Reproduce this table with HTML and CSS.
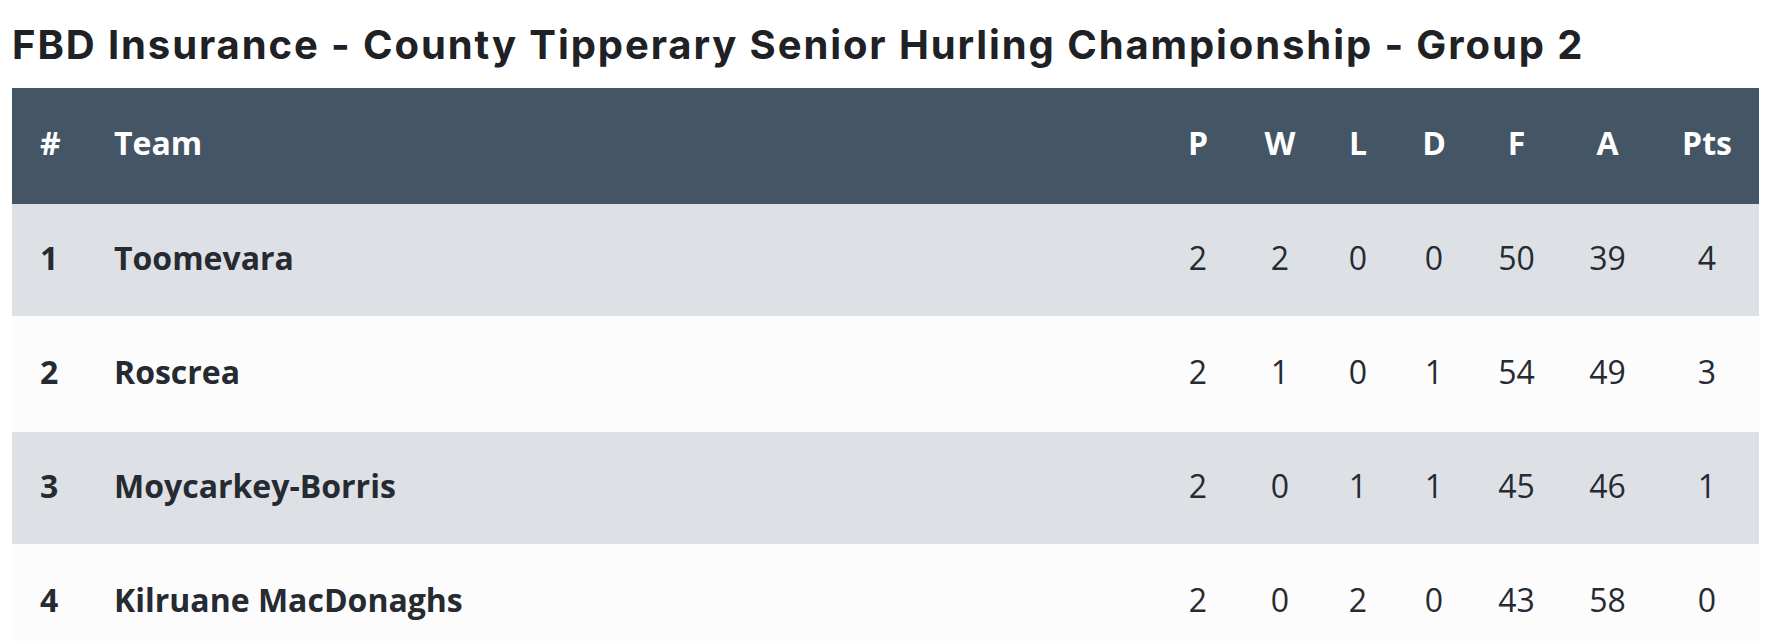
FILE: index.html
```html
<!DOCTYPE html>
<html lang="en">
<head>
<meta charset="utf-8">
<title>FBD Insurance - County Tipperary Senior Hurling Championship - Group 2</title>
<link rel="stylesheet" href="styles.css">
</head>
<body>
<div class="page">
  <h2 class="title">FBD Insurance - County Tipperary Senior Hurling Championship - Group 2</h2>
  <table class="standings">
    <colgroup>
      <col class="c-pos">
      <col class="c-team">
      <col class="c-p">
      <col class="c-w">
      <col class="c-l">
      <col class="c-d">
      <col class="c-f">
      <col class="c-a">
      <col class="c-pts">
    </colgroup>
    <thead>
      <tr>
        <th class="pos">#</th>
        <th class="team">Team</th>
        <th class="num">P</th>
        <th class="num">W</th>
        <th class="num">L</th>
        <th class="num">D</th>
        <th class="num">F</th>
        <th class="num">A</th>
        <th class="num">Pts</th>
      </tr>
    </thead>
    <tbody>
      <tr class="odd">
        <td class="pos">1</td>
        <td class="team">Toomevara</td>
        <td class="num">2</td><td class="num">2</td><td class="num">0</td><td class="num">0</td>
        <td class="num">50</td><td class="num">39</td><td class="num">4</td>
      </tr>
      <tr class="even">
        <td class="pos">2</td>
        <td class="team">Roscrea</td>
        <td class="num">2</td><td class="num">1</td><td class="num">0</td><td class="num">1</td>
        <td class="num">54</td><td class="num">49</td><td class="num">3</td>
      </tr>
      <tr class="odd">
        <td class="pos">3</td>
        <td class="team">Moycarkey-Borris</td>
        <td class="num">2</td><td class="num">0</td><td class="num">1</td><td class="num">1</td>
        <td class="num">45</td><td class="num">46</td><td class="num">1</td>
      </tr>
      <tr class="even">
        <td class="pos">4</td>
        <td class="team">Kilruane MacDonaghs</td>
        <td class="num">2</td><td class="num">0</td><td class="num">2</td><td class="num">0</td>
        <td class="num">43</td><td class="num">58</td><td class="num">0</td>
      </tr>
    </tbody>
  </table>
</div>
</body>
</html>
```

FILE: styles.css
```css
html, body {
  margin: 0;
  padding: 0;
  background: #ffffff;
}

.page {
  padding: 0 15px 0 12px;
}

.title {
  margin: 0;
  padding-top: 21px;
  height: 88px;
  box-sizing: border-box;
  font-family: "Inter", "Noto Sans", sans-serif;
  font-weight: 700;
  font-size: 40px;
  line-height: 48px;
  color: #202124;
  letter-spacing: 1.9px;
  white-space: nowrap;
}

.standings {
  width: 100%;
  border-collapse: collapse;
  table-layout: fixed;
  font-family: "Open Sans", "Liberation Sans", sans-serif;
  font-size: 32px;
  color: #262a31;
}

.c-pos { width: 74px; }
.c-team { width: auto; }
.c-p { width: 82px; }
.c-w { width: 82px; }
.c-l { width: 74px; }
.c-d { width: 78px; }
.c-f { width: 87px; }
.c-a { width: 95px; }
.c-pts { width: 104px; }

.standings th,
.standings td {
  padding: 0 0 5px 0;
  vertical-align: middle;
}

.standings thead tr {
  background: #445565;
  height: 116px;
}

.standings th {
  color: #ffffff;
  font-weight: 700;
  padding-bottom: 8px;
}

.standings .pos,
.standings .team {
  text-align: left;
  padding-left: 28px;
}

.standings td.pos,
.standings td.team {
  font-weight: 700;
}

.standings .num {
  text-align: center;
}

.standings td.num {
  font-weight: 400;
}

.standings tr.odd {
  background: #dde1e6;
  height: 112px;
}

.standings tr.even {
  background: #fcfcfd;
  height: 116px;
}
```
